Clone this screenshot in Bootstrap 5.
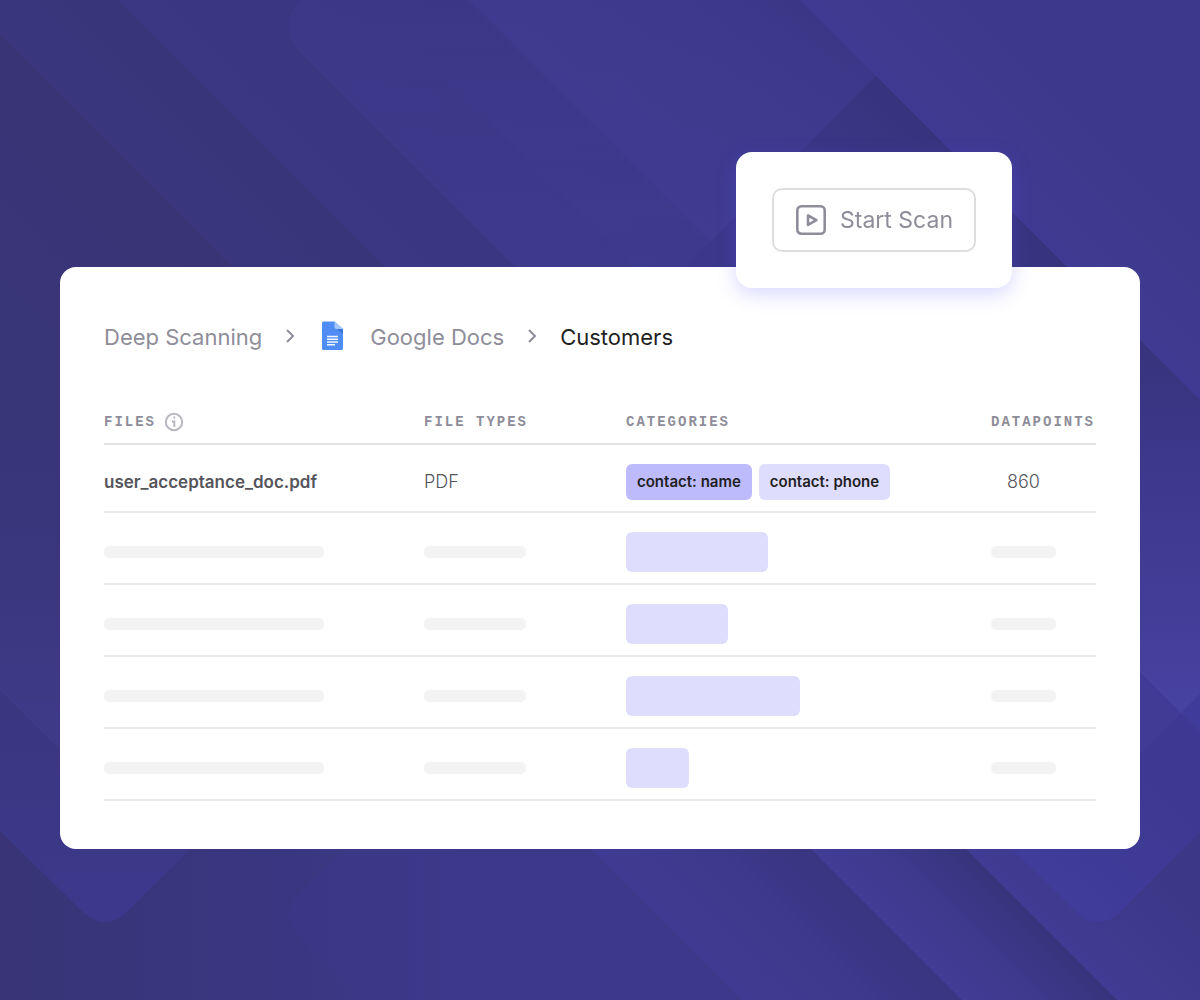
<!DOCTYPE html>
<html lang="en">
<head>
<meta charset="utf-8">
<meta name="viewport" content="width=device-width, initial-scale=1">
<title>Deep Scanning – Customers</title>
<link href="https://cdn.jsdelivr.net/npm/bootstrap@5.3.0/dist/css/bootstrap.min.css" rel="stylesheet">
<style>
  body { background: #3b3888; font-family: Inter, "Liberation Sans", sans-serif; color: #1f1f24; }
  .backdrop { position: fixed; inset: 0; width: 100%; height: 100%; z-index: -1; }
  .stage { padding: 116px 5% 0; }
  .panel { position: relative; background: #fff; border-radius: 16px; padding: 54px 44px 48px; }
  .scan-box { position: absolute; right: 128px; top: -115px; background: #fff; border-radius: 16px; padding: 36px; box-shadow: 0 6px 20px rgba(94, 88, 255, .24); }
  .scan-btn { --bs-btn-color: #8e8d99; --bs-btn-hover-color: #6f6e7a; --bs-btn-border-color: #dedede; --bs-btn-hover-border-color: #c8c8cc;
    --bs-btn-border-width: 2px; --bs-btn-border-radius: 10px; --bs-btn-padding-x: 21px; --bs-btn-padding-y: 14px;
    --bs-btn-font-size: 23px; --bs-btn-line-height: 32px; gap: 13px; height: 64px; }
  .crumbs { font-size: 22px; line-height: 32px; margin-bottom: 47px; }
  .crumbs a { color: #8e8d99; text-decoration: none; }
  .crumbs a:hover { color: #5b5b66; }
  .files-table { width: 100%; table-layout: fixed; border-collapse: separate; border-spacing: 0; font-size: 18px; line-height: 24px; color: #55555c; }
  .files-table th, .files-table td { border-bottom: 2px solid #e9e9eb; padding: 0; vertical-align: middle; }
  .files-table thead th { height: 45px; border-color: #e2e2e4; color: #8e8d99; font: bold 14px/20px "Liberation Mono", monospace; letter-spacing: 2px; white-space: nowrap; }
  .files-table tbody th, .files-table tbody td { padding: 19px 0 11px; }
  .files-table tbody th { font-size: 17px; font-weight: 600; }
  .files-table tbody td { font-weight: 300; }
  .w-files { width: 320px; } .w-types { width: 202px; } .w-points { width: 105px; }
  .tag-list { gap: 7px; }
  .tagpill { background: #dfddfd; color: #1f1f24; font-size: 15px; font-weight: 600; line-height: 20px; padding: 8px 11px; border-radius: 6px; white-space: nowrap; }
  .tagpill-strong { background: #bebbfd; }
  .bone { height: 12px; border-radius: 5px; background: #f3f3f3; }
  .bone-file { width: 220px; } .bone-type { width: 102px; } .bone-point { width: 65px; }
  .bone-tag { height: 40px; border-radius: 6px; background: #dfddfd; }
</style>
<script src="https://cdn.jsdelivr.net/npm/bootstrap@5.3.0/dist/js/bootstrap.bundle.min.js"></script>
</head>
<body>
<svg class="backdrop" viewBox="0 0 1200 1000" preserveAspectRatio="xMidYMid slice" aria-hidden="true">
  <defs>
    <linearGradient id="t0" gradientUnits="userSpaceOnUse" x1="-140" y1="140" x2="-17" y2="17"><stop stop-color="#393579"/><stop offset="1" stop-color="#383476"/></linearGradient>
    <linearGradient id="t1" gradientUnits="userSpaceOnUse" x1="-17" y1="17" x2="59" y2="-59"><stop stop-color="#3a367d"/><stop offset="1" stop-color="#39357b"/></linearGradient>
    <linearGradient id="t2" gradientUnits="userSpaceOnUse" x1="59" y1="-59" x2="124" y2="-124"><stop stop-color="#3b3782"/><stop offset="1" stop-color="#3a3681"/></linearGradient>
    <linearGradient id="t3" gradientUnits="userSpaceOnUse" x1="124" y1="-124" x2="234" y2="-234"><stop stop-color="#3c3988"/><stop offset="1" stop-color="#3b3886"/></linearGradient>
    <linearGradient id="t4" gradientUnits="userSpaceOnUse" x1="234" y1="-234" x2="400" y2="-400"><stop stop-color="#3e3b8f"/><stop offset=".6" stop-color="#3d398c"/><stop offset="1" stop-color="#3b3787"/></linearGradient>
    <linearGradient id="t5" gradientUnits="userSpaceOnUse" x1="400" y1="-400" x2="500" y2="-500"><stop stop-color="#3f3b92"/><stop offset="1" stop-color="#3c388a"/></linearGradient>
    <linearGradient id="b0" gradientUnits="userSpaceOnUse" x1="0" y1="0" x2="500" y2="0"><stop stop-color="#383477"/><stop offset=".6" stop-color="#3a3782"/><stop offset="1" stop-color="#3c398b"/></linearGradient>
    <linearGradient id="b1" gradientUnits="userSpaceOnUse" x1="-129" y1="129" x2="-19" y2="19"><stop stop-color="#3f3b92"/><stop offset=".55" stop-color="#3d398c"/><stop offset="1" stop-color="#393580"/></linearGradient>
    <linearGradient id="b2" gradientUnits="userSpaceOnUse" x1="-19" y1="19" x2="59" y2="-59"><stop stop-color="#413d96"/><stop offset=".5" stop-color="#3d398c"/><stop offset="1" stop-color="#37347c"/></linearGradient>
    <linearGradient id="b3" gradientUnits="userSpaceOnUse" x1="59" y1="-59" x2="140" y2="-140"><stop stop-color="#403c93"/><stop offset="1" stop-color="#3b3888"/></linearGradient>
    <linearGradient id="tri" gradientUnits="userSpaceOnUse" x1="970" y1="170" x2="860" y2="280"><stop stop-color="#37347e"/><stop offset="1" stop-color="#3b378a"/></linearGradient>
    <linearGradient id="side" gradientUnits="userSpaceOnUse" x1="0" y1="340" x2="0" y2="700"><stop stop-color="#37347c"/><stop offset=".4" stop-color="#3d398e"/><stop offset="1" stop-color="#46429f"/></linearGradient>
    <linearGradient id="left" gradientUnits="userSpaceOnUse" x1="0" y1="690" x2="0" y2="920"><stop stop-color="#3a367f"/><stop offset="1" stop-color="#3c398c"/></linearGradient>
    <linearGradient id="lefttop" gradientUnits="userSpaceOnUse" x1="0" y1="400" x2="0" y2="750"><stop stop-color="#3a3680" stop-opacity="0"/><stop offset="1" stop-color="#3f3b88"/></linearGradient>
    <linearGradient id="right" gradientUnits="userSpaceOnUse" x1="1190" y1="780" x2="1090" y2="900"><stop stop-color="#3d3990"/><stop offset="1" stop-color="#3f3c9a"/></linearGradient>
    <linearGradient id="glow" gradientUnits="userSpaceOnUse" x1="0" y1="0" x2="0" y2="300"><stop stop-color="#433f9c" stop-opacity="0"/><stop offset="1" stop-color="#433f9c" stop-opacity=".5"/></linearGradient>
  </defs>
  <path fill="url(#t0)" d="M0 0V700H665L-35 0Z"/>
  <path fill="url(#t1)" d="M0 0V35L565 600H718L118 0Z"/>
  <path fill="url(#t2)" d="M118 0L718 600H860L310 50V0Z"/>
  <path fill="url(#t3)" opacity=".85" d="M300 0Q278 25 298 50L848 600H1069L469 0Z"/>
  <path fill="url(#glow)" d="M248 0L548 300H769L469 0Z" opacity=".5"/>
  <path fill="url(#t4)" d="M469 0L1069 600H1200V400L800 0Z"/>
  <path fill="url(#glow)" d="M367 0L667 300H769L469 0Z" opacity=".4"/>
  <path fill="url(#glow)" d="M469 0L769 300L952 0Z" opacity=".5"/>
  <path fill="url(#t5)" d="M800 0L1200 400V0Z"/>
  <path fill="url(#tri)" d="M876 76L683 269V300H1100Z"/>
  <path fill="url(#lefttop)" d="M0 400H70V760L0 690Z"/>
  <path fill="url(#b0)" d="M0 830H573L742 1000H0Z"/>
  <path fill="#3d3a8c" opacity=".4" d="M350 844L299 895Q278 915 299 936L363 1000H742L586 844Z"/>
  <path fill="url(#left)" d="M0 690L70 760V840H199L126 913Q105 931 84 913L0 831Z"/>
  <path fill="url(#b1)" d="M572 830L742 1000H962L792 830Z"/>
  <path fill="url(#b2)" d="M792 830L962 1000H1117L947 830Z"/>
  <path fill="url(#b3)" d="M947 830L1117 1000H1200V830Z"/>
  <path fill="url(#side)" d="M1130 330L1200 400V735L1130 665Z"/>
  <path fill="#403c95" d="M1130 662L1200 732V833H1130Z"/>
  <path fill="#3f3b9a" d="M1181 713L1200 694V732Z"/>
  <path fill="#3d3992" d="M1181 713L1200 732V833L1130 764Z"/>
  <path fill="url(#right)" d="M1130 765L1200 833L1119 913Q1098 931 1077 913L1003 840H1130Z"/>
</svg>

<main class="stage min-vh-100 d-flex align-items-center">
  <section class="panel flex-grow-1">
    <div class="scan-box">
      <button type="button" class="btn scan-btn d-flex align-items-center">
        <svg width="32" height="32" viewBox="0 0 32 32" fill="none" stroke="currentColor" stroke-width="2.6" stroke-linejoin="round" aria-hidden="true"><rect x="2.3" y="2.3" width="27.400" height="27.400" rx="4"/><path d="M13 11.500v9.400l8.400-4.700z"/></svg>
        Start Scan
      </button>
    </div>

    <nav aria-label="Breadcrumb">
      <ol class="crumbs list-unstyled d-flex align-items-center flex-wrap">
        <li><a href="#">Deep Scanning</a></li>
        <li class="d-flex px-3" aria-hidden="true"><svg width="24" height="32" viewBox="0 0 24 32" fill="none" stroke="#8e8d99" stroke-width="2"><path d="M9 9l6 6-6 6"/></svg></li>
        <li><a href="#" class="d-flex align-items-center">
          <svg class="ms-1 me-4" width="24" height="32" viewBox="0 0 24 32" aria-hidden="true"><path fill="#4f8df5" d="M1.500 .5h11L21 8v19.500a1.500 1.500 0 0 1-1.500 1.500h-18a1.500 1.500 0 0 1-1.500-1.500v-25.500a1.500 1.500 0 0 1 1.500-1.500z"/><path fill="#a5c6fb" d="M12.500 .5L21 8h-6.500a2 2 0 0 1-2-2z"/><path fill="#3b73d6" d="M15 8h6v5z"/><path stroke="#f1f6ff" stroke-width="1.500" d="M5 15.500h11M5 18.300h11M5 21h11M5 23.800h8"/></svg>
          Google Docs</a></li>
        <li class="d-flex px-3" aria-hidden="true"><svg width="24" height="32" viewBox="0 0 24 32" fill="none" stroke="#8e8d99" stroke-width="2"><path d="M9 9l6 6-6 6"/></svg></li>
        <li aria-current="page">Customers</li>
      </ol>
    </nav>

    <table class="files-table">
      <colgroup><col class="w-files"><col class="w-types"><col><col class="w-points"></colgroup>
      <thead>
        <tr>
          <th scope="col"><span class="d-flex align-items-center gap-2">FILES
            <svg width="20" height="20" viewBox="0 0 20 20" fill="none" stroke="#b9b8c0" stroke-width="2" aria-hidden="true"><circle cx="10" cy="10" r="8.200"/><path d="M8 9.500h2.300v5.500M9.300 5.500h2"/></svg></span></th>
          <th scope="col">FILE TYPES</th>
          <th scope="col">CATEGORIES</th>
          <th scope="col">DATAPOINTS</th>
        </tr>
      </thead>
      <tbody>
        <tr>
          <th scope="row">user_acceptance_doc.pdf</th>
          <td>PDF</td>
          <td><div class="d-flex tag-list"><span class="tagpill tagpill-strong">contact: name</span><span class="tagpill">contact: phone</span></div></td>
          <td><span class="ps-3">860</span></td>
        </tr>
        <tr><td><div class="bone bone-file"></div></td><td><div class="bone bone-type"></div></td><td><div class="bone-tag" style="width:142px"></div></td><td><div class="bone bone-point"></div></td></tr>
        <tr><td><div class="bone bone-file"></div></td><td><div class="bone bone-type"></div></td><td><div class="bone-tag" style="width:102px"></div></td><td><div class="bone bone-point"></div></td></tr>
        <tr><td><div class="bone bone-file"></div></td><td><div class="bone bone-type"></div></td><td><div class="bone-tag" style="width:174px"></div></td><td><div class="bone bone-point"></div></td></tr>
        <tr><td><div class="bone bone-file"></div></td><td><div class="bone bone-type"></div></td><td><div class="bone-tag" style="width:63px"></div></td><td><div class="bone bone-point"></div></td></tr>
      </tbody>
    </table>
  </section>
</main>
</body>
</html>
